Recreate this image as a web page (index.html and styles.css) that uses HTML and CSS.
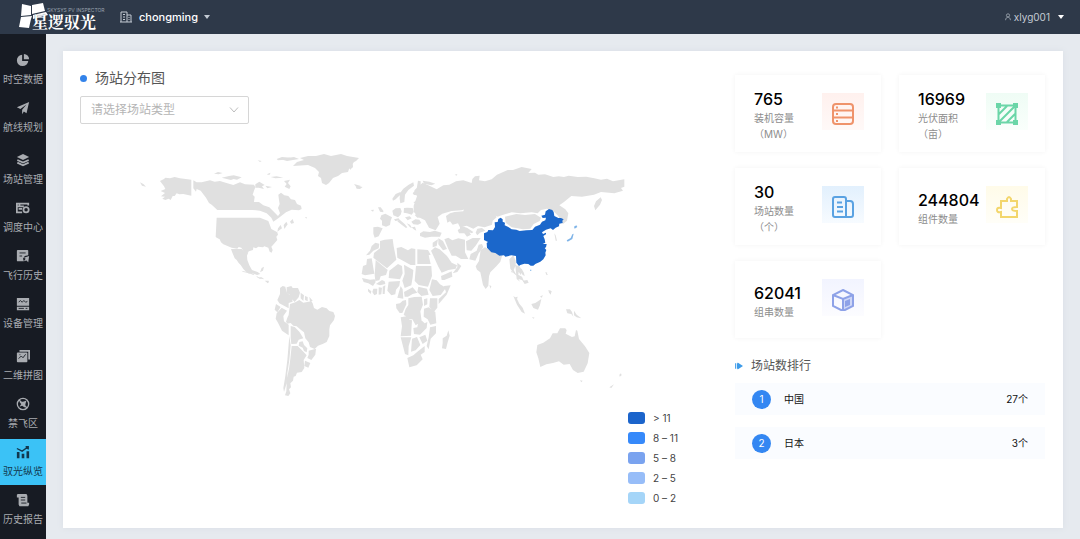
FILE: index.html
```html
<!DOCTYPE html>
<html lang="zh-CN">
<head>
<meta charset="utf-8">
<title>驭光纵览</title>
<link rel="stylesheet" href="styles.css">
</head>
<body>
<header class="topbar">
  <a class="logo" href="#" aria-label="星逻驭光">
    <svg class="logo-mark" viewBox="0 0 34 28" aria-hidden="true"><path d="M3 2 12 4 12 13 2 14ZM13 3 24 1 26 9 13 12ZM2 15 13 14 12 17 10 26 0 25ZM14 13 27 10 29 13 14 17Z"/></svg>
    <span class="logo-text"><span class="logo-sub">SKYSYS PV INSPECTOR</span><span class="logo-name">星逻驭光</span></span>
  </a>
  <button class="tenant" type="button">
    <svg class="tenant-icon" viewBox="0 0 12 12" aria-hidden="true"><path d="M1 11V1h6v10M7 4h4v7M0 11h12M3 3.500h2M3 6h2M3 8.500h2M8.500 6.500h1M8.500 8.500h1"/></svg>
    <span>chongming</span><i class="caret"></i>
  </button>
  <button class="user" type="button">
    <svg class="user-icon" viewBox="0 0 8 10" aria-hidden="true"><circle cx="4" cy="3" r="2"/><path d="M1 9c0-5 6-5 6 0"/></svg>
    <span>xlyg001</span><i class="caret"></i>
  </button>
</header>
<div class="shell">
  <nav class="sidebar">
    <a class="item" href="#"><svg viewBox="0 0 16 16"><path class="f" d="M7 2a6.500 6.500 0 1 0 7 7H7Z"/><path class="f" d="M9 1v6h6a6 6 0 0 0-6-6Z"/></svg><span>时空数据</span></a>
    <a class="item" href="#"><svg viewBox="0 0 16 16"><path class="f" d="M15 1 1 7l4 2 7-5-5 6v5l2-3 3 2Z"/></svg><span>航线规划</span></a>
    <a class="item group" href="#"><svg viewBox="0 0 16 16"><path class="f" d="M8 1l7 3.500L8 8 1 4.500Z"/><path class="l" d="M1.500 8 8 11l6.500-3M1.500 11 8 14l6.500-3"/></svg><span>场站管理</span></a>
    <a class="item" href="#"><svg viewBox="0 0 16 16"><path class="l" d="M7 13H1V3h13v2M1 6h8M3 9h4"/><circle class="l" cx="11.500" cy="10" r="3"/><path class="l" d="M4 3v3"/></svg><span>调度中心</span></a>
    <a class="item" href="#"><svg viewBox="0 0 16 16"><path class="f" d="M2 1h11a1 1 0 0 1 1 1v5l-4 1-2 3 1 3H2a1 1 0 0 1-1-1V2a1 1 0 0 1 1-1Z"/><path class="cut" d="M4 4.500h7M4 8h3"/><path class="f" d="M15 8l-6 2 2 1-2 3 3-1 2 2Z"/></svg><span>飞行历史</span></a>
    <a class="item" href="#"><svg viewBox="0 0 16 16"><path class="f" d="M1 1h14v9H1ZM1 11h14v4H1Z"/><path class="cut" d="M3 6l2-2 2 2 2-2 2 2 2-1M3 13h6M11 13h2"/></svg><span>设备管理</span></a>
    <a class="item group" href="#"><svg viewBox="0 0 16 16"><path class="l" d="M4 2h11v10"/><rect class="f" x="1" y="4" width="12" height="11" rx="1"/><path class="cut" d="M3 11l3-3 2 2 3-4M4 6.500h1"/></svg><span>二维拼图</span></a>
    <a class="item" href="#"><svg viewBox="0 0 16 16"><circle class="l thin" cx="8" cy="8" r="6.500"/><path class="l thin" d="M3.500 3.500l9 9"/><path class="f" d="M12 4 9 5 4 6l2 2-2 3 3-1 3 2 1-5Z"/></svg><span>禁飞区</span></a>
    <a class="item active" href="#"><svg viewBox="0 0 16 16"><path class="f" d="M1 8h3v7H1ZM6.500 10h3v5h-3ZM12 7h3v8h-3Z"/><path class="l thin" d="M1 4l6 3 7-5M11 2h3v3"/></svg><span>驭光纵览</span></a>
    <a class="item" href="#"><svg viewBox="0 0 16 16"><path class="f" d="M2 1h10l1 2v8h2v2l-1 2H4l-1-2V5H1V2Z"/><path class="cut" d="M5.500 5h5M5.500 8h5M6 11.500h6"/></svg><span>历史报告</span></a>
  </nav>
  <main class="main">
    <section class="panel">
      <div class="overview">
        <h1 class="title">场站分布图</h1>
        <div class="picker">
          <select aria-label="场站类型"><option>请选择场站类型</option></select>
          <svg viewBox="0 0 10 8" aria-hidden="true"><path d="M1 1.500 5 6l4-4.500"/></svg>
        </div>
        <svg class="map" viewBox="80 124 655 281" role="img" aria-label="场站分布图">
          <g transform="translate(130 145) scale(.33333)">
            <path d="M30 112l10 5 8 8-12-3ZM90 108l12-6 4-4 14 2 14-4 16 4 34 4v48l-24-5-12 1-8-3-6 8-6 0-6 12-6-4-10 4-9-4 8-6-12-1 12-10-13-6 14-6-4-8Z"/>
            <path d="M190 106l10 6 15 0 25-6 14 4 16-2 12 4 28 8 20-8 15 6 27 1 4 8-4 10-4 12 6 6-2 16 15 0 13 10 18 6 12 12 14 14 6-8-6-16 5-12-2-12-2-16 8-6 10 8 12 2 8 10 12 2 6 12 12 5 2 10-8 4-22-2-17 8-23 18-15 10-6-12-14-13-20-8-22-2-106 0-17-16-8-5-9-16-16-21-12-5-2 8-8-10Z"/>
            <path d="M260 218h130l25 10 9 24 18 10 2 7-5 6 3 10-13 15-5 5 4 10-3 8-6-3-4-12-12-4-4 3-14-2-7 5-8-3-1 8-12 4-6 5-10-4-7-12-8-2-4 5-17-3-25-10-7-6-4-9-9-5-3-3Z"/>
            <path d="M303 312h32l8 8 12 2-4 10 1 13 6 16 8 14 17 6 8 6-10 3-16-6-8 2-9-6-8-8-8-12-6-6-6-9-6-5-8-20ZM390 382l5-13 7-4-3 12ZM385 397l10 0 8 6-8-2ZM404 407l12 0-2 8ZM402 398l12 0Z"/>
            <path d="M252 86l12-5 14 3-12 4ZM275 98l22-5 14-2 24 6-14 7-10-2-8 3ZM383 46l12 2-5 3ZM440 42l16-6 26 2-18 6-20 2ZM410 88l12-5-4 7ZM376 118l12-8 16 10-8 4 6 8-16-4-10 0ZM406 122l20 4-14 4ZM462 108l18-4-6 10 8 10-4 8-14-7 6-8ZM422 96l18-2 20 4-24 2ZM444 250l8-10 4 10-14 10ZM461 240l8-10 4 8-10 14ZM480 230l8-8 4 12-8 2ZM525 216l6 1-2 4Z"/>
          </g>
          <path d="M293 166l4-4 7-2-4-2 8-2 8 0 8-2 7 2 10-2 6 2 12 2-3 3-4 2 1 4-4 2-1 3-6 1-4 3-5 2-4 5-3 2-4-2-1-5-3-2 1-4-4-4-7-3ZM354 184l7 2-4 2ZM280 159l14-2 5 2-12 2Z"/>
          <g transform="translate(240 270) scale(.33333)">
            <path d="M4 2l20 4 20 6-4 3-12-5-18-4ZM50 18l10 6 8 1-8 2-10-6ZM78 34l9 0-3 6ZM120 54l8-6 8 2 4 18 14 10 4 17-12 4 0 16-28-15-6-10 8-18ZM140 52l14-4 4 6 16 0 6 14-4 14-12 14-8-8-6-14-10-6ZM182 68l10 8-2 17-8-8ZM195 78l8 3 0 13-8-4ZM208 80l10 12-8 4ZM108 102l14 9-10 16-8-8ZM125 113l16 9-11 16 2 16 14 10 0 32-20-14-12-24-7-12 3-16Z"/>
            <path d="M150 102l16-5 12-7 12 8 24-4 4 6 4 14 10 5 14-8 14 4 8 8 12 3 5 12-3 12-12 16-2 12 0 20-8 18-12 6-14 5-10 10-14-6-4-14-10-12-4-18-8-6-14-12-10-2-8-8-10 2-4-6 4-12 4-8Z"/>
            <path d="M152 168l12 3 14 14 12 20-14 4-6 12-16 1-2-18ZM178 216l10-2 4 11 10 10-2 12-8-4-4-10-12-6ZM148 198l4 28-4 44-6 40-2 30-8 26-2-12 6-36 6-48ZM155 228h18l18 18 9 10-9 14 2 24-8 12-14 2-4 10-6 2-2 12-8 8 2 12-6 6 4 12-6 8-10-2 4-12 2-40 6-28 4-30ZM206 242l22-6-2 18-12 16-12-6 4-10ZM195 272l16 7-6 14-12-5Z"/>
          </g>
          <g transform="translate(350 140) scale(.33333)">
            <path d="M0 62l16-4-8 14 0 10-8 8ZM18 142l8-3 12 2-8 6-10-1ZM84 202l8 0 8 10 0 5-10-2ZM62 210l10-1-3 6ZM127 176l10-14 14-6 0 8-14 14-8 4ZM150 160l10-14 16-12 14-7 2 10-17 13-10 14-2 22-12 4-2-14ZM188 160l12-14 4-24 8 2 0 12 7 10-1 12-12 8-14-1ZM218 122l20 3 18 6-12 5-22-5ZM190 186l14-3 6 7-10 4ZM127 212l10-7 14-1 4 10-3 10-8 8-14-6ZM162 204l10-1 16 1 3 12-6 8-14-4-10-2ZM195 203l12-9 14 3 6 10-10 4-18-1ZM94 226l12-5 20 11-4 10-2 13-12 5-12-4 0-14-6-6ZM70 262l14-2 14 5-6 12-6 12-12 4-4-12ZM194 225l14-8 14 6-4 8-16 2ZM224 223l14-3 18 10-6 7-14 6-12-8ZM184 245l12-7 12 1 6 10-10 5-14-1ZM210 280l10-6 20 2 14-4 21 6-5 12-25 0-20 3-15-5ZM165 232l14-3 6 6-12 6ZM142 244l8-4 14 12 8 10-4 2-16-12ZM170 250l10 4 6 10-6-2ZM185 262l10-2 4 12-8-4ZM132 238l14-3 4 6-14 2ZM314 104l8-2-2 5Z"/>
            <path d="M288 228l12-8 14-4 26-2 4-14 18-1 12-4 16 4 18 4 12 14 15 3 5 12-12 10-2 12-22 8-20-4-14 8-20-9-20 5-6-12-16 4-8-10-8 4ZM323 270l14-8 14 4 12 18-12 6-8-10-16 0ZM330 256l22 8 18 12-4 4-16-6-20-8ZM382 266l14-2 10 8-16 6-8 8-5-8Z"/>
          </g>
          <g transform="translate(350 230) scale(.33333)">
            <path d="M65 48l11-10 12 3-2 14-16 7-12 12-10 2 12-14ZM90 33l14-4 24-2 3 22 8 40-28 26-41-32 2-14 18-14ZM140 54l14-3 20 10 10-6 12 2v48l-14 0-26-14-14-8ZM202 58l32 2 8 14-6 2 6 26h-40ZM35 132l4-24 10-4 2-17 14-2 8 46-28 5ZM77 90l36 30-5 15-16 4-4 12-12 2-2-18ZM118 122l26-20 12 6 2 22-8 18-34-4ZM162 104l28 16-2 22-4 24-20 8-7-22 7-20ZM198 108h46l2 30-12 32-28-5-12-12ZM246 148l14 3 10 12 18 10-16 22-24 3-10-18ZM282 168l20-2-12 28-24 28 0-15 22-20ZM116 155l34-2-2 14-10 12-2 14-12 3-12-14ZM152 168l6 10 2 28-18-3 4-14ZM162 186l26-14 14 16-14 4-14 8-10 0ZM205 170l26 6 5 18-22 4-12-12ZM36 144l24 5 14-1 3 8-8 12-14-8-14-4ZM70 176l12 0-1 16-8 4-6-10ZM86 172l10 1-2 20-8 1ZM98 170l8-4-2 26-6 0ZM78 162l18-12 8 4 2 8-16 4ZM54 176l10 8-2 8-8-8Z"/>
            <path d="M175 205l18-4 22-1 4 24-8 20 4 30-18 12-10-18-16 0-4-10-6-3 6-18 8-12ZM138 222l12-2 8-8 10-2 1 13-12 26-8 0-10-14ZM240 205l22 0 0 28-10 12-14-14ZM222 208l10-3 0 18-10 5ZM222 236l14-4 20 14 3 34-18 4-8-16-12-8ZM152 262l18-3 8 10 8 2-3 46-31 2 4-30ZM190 294l12-2 2-12 12-8 8 8 8-4-2 18-20 20-18-2ZM240 292l18-4 0 22-16 16-6 32-6-10 6-26ZM152 322l32 0-8 26-1 28-10-4ZM186 326l15-5 10 24-14 16-14 4ZM208 322l18-8 6 18-14 10ZM172 384l18-8 14-12 20-16 0 18-12 8 6 14-18 18-22 6ZM278 325l12-8 5-16 4 16-6 20-5 20-12-2 2-16Z"/>
            <path d="M248 38l16-10-4 20-12 4ZM265 25l14 8 12 24-12 4-14-18ZM243 62l12-10 14 6 22 20 14 20 16 8-4 10-22 4-20 8-10-18ZM273 138l14-6 18-8 2 16-24 10-8 0ZM322 98l12 10-12 18-14 4 14-18ZM283 28l12-5 12 8 18-6 20 4 0 38 10 20-22 0-16-10-12 0-10-20ZM348 34l20-10 24 0-14 22-14 16-14-1ZM396 42l4 10-14 18-10 22-18-4 4-16 18-10 6-18Z"/>
          </g>
          <g transform="translate(460 150) scale(.33333)">
            <path d="M-112 98l17 8 25 12 20-12 18-2 20-10 22-3 25 8 2-12 8-8 14-2-2 14 18 3 20-6 16-14 32-14 16 0 26-9 30 6-10 12 20-1 10 6 20-1 25 8 16-2 16 2 14-4 27 4 26-1 24 5 20 4 18-3 18 8 34-6v22l-10 4 6 8-26 8-40-4-21 8-36 6-32-2-22 18-14 10 18 12 9 12-4 22-12 10-8-8-6-16-16-16-18-6-18 4-10 10-18-3-34 3-26-3-30 9-12 4-26-14-30-12-24-2-28 9-30 2-28 8-14 10 6 20-12 20-20-8-12-22-20-10-14-16 0-18 10-28-8-18Z"/>
            <path d="M135 200l34-8 26 3 30-3 18 11-4 10-18 9-10 14-22 2-34-6-18-14ZM62 300l13-8 16 8 18 9 18 6-6 20-12 14-18 18-4 12-2 28-8 10-8-12-8-38-10-8-4-10 10-16ZM88 406l6 2-2 8ZM148 328l12-12 7 16 0 14-6 14 10 18-10-8-10-14ZM166 345l12 4 10 14-6 12-6-10-2 20 6 10-10-8ZM184 355l8 14 2 10-8-6ZM188 392l14-2 4 8-12 4ZM402 168l6-14 14-12 4 8-6 14-14 17ZM283 250l4 6 4 16-4 0ZM256 366l6 2-3 7ZM165 442l8-2-2 8ZM240 440l8-5-2 8ZM265 420l8 2 0 12-6-6Z"/>
            <path class="top" d="M72 250l10-4 3-6 14 1 6-10-1-14 9-1 2-9 7-4 6 5 0 7 7 3-1 8 11 5 10 7 14 1 10 4 20-2 18-1 8-10 15-6 6-9 10-4 2-8-10 1-4-7 11-3 2-10 10-7 10 3 4 6 2 12 12 6 8 0 8 4-4 4 1 7-10 2-1 8-10 4-8 7-7-5-14 4-12 8 3 5 9-4 0 5-8 5 4 10 2 10-8 4 12 0-2 10-4 2 5 6-3 8 1 8-7 12-9 7-15 7-6 5-8 0-7-5-12-1-12 4-4 3-8-10-1-20-14-2-18 4-4-4-14 1-12-8-12-2-13-14-1-14 4-3-12-6Z"/>
            <path class="low" d="M320 271l12-7 5-11 4-2-4 16-14 8ZM342 230l7-4 3 5-8 5ZM210 359h4v3h-4Z"/>
          </g>
          <g transform="translate(500 270) scale(.33333)">
            <path d="M40 78l10 7 8 16 10 12 7 18-10-5-14-22ZM94 102l12-3 18-12-4 18-6 14-14-5ZM96 141l8 2-4 3ZM198 118l12 0 6 8 4 14-6-8-12-2ZM222 122l8 12 14 11-14-3-8-6ZM152 62l4 3-3 3ZM138 10l6 3-4 3ZM50 12l16 8 8 18-8-8-14-4ZM32 2l8 4-4 2ZM358 314l5-4 2 6-6 4ZM328 352l14-9-8 11ZM240 331l8 1-4 5Z"/>
            <path d="M112 225l18-7 20-13 8-15 14 0 8-15 16 0 4 6-3 10 19 10 8-2 4-19 4 2 5 25 18 22 13 20-5 31-12 25-18 4-14-9-10-18-18 2-14-10-18 5-20 4-18 8-6-26-6-18Z"/>
          </g>
        </svg>
        <ul class="legend">
          <li><i class="swatch s5"></i>&gt; 11</li>
          <li><i class="swatch s4"></i>8 – 11</li>
          <li><i class="swatch s3"></i>5 – 8</li>
          <li><i class="swatch s2"></i>2 – 5</li>
          <li><i class="swatch s1"></i>0 – 2</li>
        </ul>
      </div>
      <aside class="stats">
        <div class="cards">
          <article class="card"><div class="figure"><strong>765</strong><span>装机容量（MW）</span></div><div class="tile orange"><svg viewBox="0 0 22 22"><rect x="1" y="1" width="20" height="20" rx="3"/><path d="M1 7.500h20M1 14.500h20M4 4.500h2M4 11h2M4 18h2"/></svg></div></article>
          <article class="card"><div class="figure"><strong>16969</strong><span>光伏面积（亩）</span></div><div class="tile green"><svg viewBox="0 0 22 22"><path d="M2.500 2.500h17v17h-17ZM3 11l8-8M4 18 18 4M11 19l8-8"/><path class="solid" d="M0 0h5v5H0ZM17 0h5v5h-5ZM0 17h5v5H0ZM17 17h5v5h-5Z"/></svg></div></article>
          <article class="card"><div class="figure"><strong>30</strong><span>场站数量（个）</span></div><div class="tile blue"><svg viewBox="0 0 22 22"><path d="M3 1h9q2 0 2 2v18H3q-2 0-2-2V3q0-2 2-2ZM14 5h4q3 0 3 3v11q0 2-2 2h-5M5 6.500h5M5 11h6M5 15.500h6"/></svg></div></article>
          <article class="card"><div class="figure"><strong>244804</strong><span>组件数量</span></div><div class="tile yellow"><svg viewBox="0 0 22 22"><path d="M5 5h6V3q2-4 4 0v2h6v6q-5 0-5 2t5 2v6H5v-5q-4 1-4-2t4-2Z"/></svg></div></article>
          <article class="card"><div class="figure"><strong>62041</strong><span>组串数量</span></div><div class="tile violet"><svg viewBox="0 0 22 22"><path d="M11 1l10 5v11l-10 5-10-5V6ZM1 6l10 4 10-4M11 10v12"/><path class="solid faint" d="M11 10l10-4v11l-10 5Z"/><path class="solid" d="M13 12l5-2v6l-5 2Z"/></svg></div></article>
        </div>
        <h2 class="rank-title"><svg viewBox="0 0 9 8" aria-hidden="true"><path d="M0 1h1v6H0ZM2 1h1v6H2ZM3 0l6 4-6 4Z"/></svg>场站数排行</h2>
        <ol class="rank">
          <li><b>1</b><span>中国</span><em>27个</em></li>
          <li><b>2</b><span>日本</span><em>3个</em></li>
        </ol>
      </aside>
    </section>
  </main>
</div>
</body>
</html>
```
FILE: styles.css
```css
* { box-sizing: border-box; }
body {
  margin: 0;
  min-height: 100vh;
  display: flex;
  flex-direction: column;
  font: 10px/16px Inter, "Noto Sans CJK SC", sans-serif;
  color: #222;
  background: #e6eaef;
}
h1, h2, ul, ol { margin: 0; padding: 0; font-weight: 400; list-style: none; }
a { text-decoration: none; color: inherit; }
button { font: inherit; color: inherit; background: none; border: 0; padding: 0; display: flex; align-items: center; }

.topbar {
  height: 34px;
  display: flex;
  align-items: center;
  padding: 0 16px 0 19px;
  background: #2e3949;
  color: #fff;
}
.logo { display: flex; width: 101px; height: 30px; }
.logo-mark { flex: none; width: 34px; height: 28px; fill: #fff; }
.logo-text { display: flex; flex-direction: column; margin-left: -21px; padding-top: 5px; white-space: nowrap; }
.logo-sub { font-size: 5px; line-height: 6px; padding-left: 15px; color: #98a1ad; }
.logo-name { font-size: 16px; line-height: 18px; font-weight: 700; font-family: "Noto Serif CJK SC", "Noto Sans CJK SC", serif; text-shadow: 0 0 1px #2e3949; }
.tenant { font-size: 11px; font-weight: 500; }
.tenant-icon { width: 12px; height: 12px; margin-right: 7px; fill: none; stroke: #c4cbd4; }
.caret { border: 3px solid transparent; border-top: 4px solid #c4cbd4; border-bottom: 0; margin-left: 6px; }
.user { margin-left: auto; color: #c4cbd4; }
.user-icon { width: 8px; height: 8px; margin-right: 2px; fill: none; stroke: #a5adb8; }
.user .caret { border-top-color: #fff; margin-left: 8px; }

.shell { flex: 1; display: flex; }
.sidebar { width: 46px; flex: none; padding-top: 13px; display: flex; flex-direction: column; gap: 2px; background: #171b23; color: #a9acb1; }
.item { height: 46px; display: flex; flex-direction: column; align-items: center; padding-top: 6px; gap: 4px; }
.item.group { margin-top: 4px; }
.item svg { width: 14px; height: 14px; }
.item .f { fill: currentColor; }
.item .l { fill: none; stroke: currentColor; stroke-width: 2; }
.item .thin { stroke-width: 1.5; }
.item .cut { fill: none; stroke: #171b23; stroke-width: 1; }
.item.active { background: #3bc2f6; color: #12384f; }

.main { flex: 1; min-width: 0; display: flex; padding: 17px 17px 11px; }
.panel {
  flex: 1;
  display: grid;
  grid-template-columns: minmax(0, 655fr) minmax(0, 310fr);
  padding: 0 18px 0 17px;
  background: #fff;
  box-shadow: 0 0 6px #d9dee5;
}
.overview { display: flex; flex-direction: column; padding-top: 17px; }
.title { display: flex; align-items: center; gap: 8px; font-size: 14px; line-height: 20px; color: #555; }
.title::before { content: ""; width: 7px; height: 7px; border-radius: 50%; background: #3383ea; }
.picker { position: relative; width: 169px; margin-top: 8px; }
.picker select {
  display: block;
  width: 100%;
  height: 28px;
  padding: 0 10px;
  appearance: none;
  font: inherit;
  font-size: 12px;
  color: #b5b5b5;
  background: #fff;
  border: 1px solid #d6d6d6;
  border-radius: 2px;
}
.picker svg { position: absolute; right: 10px; top: 10px; width: 10px; height: 8px; fill: none; stroke: #bdbdbd; pointer-events: none; }
.map { display: block; width: 100%; fill: #e0e0e0; }
.map .top { fill: #1b67cb; }
.map .low { fill: #7fb4e8; }
.legend { align-self: flex-end; width: 54px; margin: 3px 53px 0 0; color: #444; }
.legend li { display: flex; align-items: center; gap: 8px; height: 20px; white-space: nowrap; }
.swatch { flex: none; width: 17px; height: 12px; border-radius: 3px; }
.s5 { background: #1b64cb; }
.s4 { background: #3689fa; }
.s3 { background: #7aa3ef; }
.s2 { background: #97bdf8; }
.s1 { background: #a5d5f8; }

.stats { padding-top: 24px; }
.cards { display: grid; grid-template-columns: repeat(2, minmax(0, 1fr)); gap: 16px 18px; }
.card { display: flex; align-items: center; height: 77px; padding: 0 17px 0 19px; gap: 4px; box-shadow: 0 0 5px #f3f3f3; }
.figure { flex: 1; min-width: 0; padding-top: 2px; display: flex; flex-direction: column; }
.figure strong { font-size: 16px; line-height: 22px; font-weight: 500; color: #000; }
.figure span { color: #8d8d8d; }
.tile { flex: none; align-self: flex-start; width: 42px; height: 37px; margin-top: 18px; display: flex; align-items: center; justify-content: center; padding-top: 4px; }
.tile svg { width: 22px; height: 22px; fill: none; stroke: currentColor; stroke-width: 2; }
.tile .solid { fill: currentColor; stroke: none; }
.tile .faint { opacity: .4; }
.orange { color: #ef936b; background: linear-gradient(#fff1ee, #fff9f8); }
.green { color: #6bd6a8; background: linear-gradient(#effcf5, #fafffc); }
.blue { color: #5aa2e2; background: linear-gradient(#e2f0fd, #f7fbff); }
.yellow { color: #f3d66c; background: linear-gradient(#fffbe9, #fffef8); }
.violet { color: #8ea2e8; background: linear-gradient(#f2f4ff, #fcfcff); }

.rank-title { display: flex; align-items: center; gap: 8px; margin: 19px 0 8px; font-size: 12px; line-height: 18px; color: #555; }
.rank-title svg { width: 8px; height: 8px; fill: #3d9be9; }
.rank { display: grid; gap: 12px; }
.rank li { display: flex; align-items: center; height: 32px; padding: 0 17px; background: #fafcff; color: #111; }
.rank b { width: 19px; height: 19px; margin-right: 13px; border-radius: 50%; background: #3487f2; color: #fff; font-weight: 400; line-height: 19px; text-align: center; }
.rank em { margin-left: auto; font-style: normal; }
```
